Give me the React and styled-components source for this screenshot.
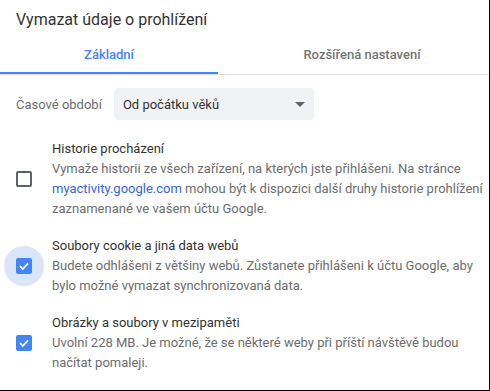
import styled, { createGlobalStyle } from 'styled-components';

const GlobalStyle = createGlobalStyle`
    html, body {
        margin: 0;
        padding: 0;
        background: #ffffff;
    }
    * {
        box-sizing: border-box;
    }
`;

const Dialog = styled.div`
    width: 490px;
    height: 391px;
    background: #ffffff;
    border-right: 1px solid #000000;
    border-bottom: 1px solid #000000;
    font-family: Roboto, 'Noto Sans', Arial, sans-serif;
    overflow: hidden;
`;

const Header = styled.div`
    padding: 10px 16px;
    font-size: 16px;
    line-height: 20px;
    color: #333333;
`;

const TabBar = styled.div`
    display: flex;
    border-bottom: 1px solid #e0e0e0;
`;

const Tab = styled.div`
    width: ${(p) => p.$width}px;
    padding: 5px 0 7px ${(p) => p.$indent || 0}px;
    font-size: 13px;
    font-weight: 500;
    line-height: 20px;
    text-align: center;
    color: ${(p) => (p.$active ? '#4285f4' : '#757575')};
    border-bottom: 2px solid ${(p) => (p.$active ? '#4285f4' : 'transparent')};
    white-space: nowrap;
`;

const SelectRow = styled.div`
    display: flex;
    align-items: center;
    gap: 12px;
    padding: 13px 16px 0;
`;

const Label = styled.span`
    font-size: 13px;
    color: #6d6d6d;
`;

const Select = styled.div`
    width: 200px;
    height: 32px;
    display: flex;
    align-items: center;
    justify-content: space-between;
    padding: 0 9px;
    background: #f1f2f3;
    border-radius: 4px;
    font-size: 13px;
    color: #333333;
`;

const Arrow = styled.span`
    width: 0;
    height: 0;
    margin-right: 0;
    border-left: 5px solid transparent;
    border-right: 5px solid transparent;
    border-top: 5px solid #5f6368;
`;

const List = styled.div`
    display: flex;
    flex-direction: column;
    gap: 17px;
    padding-top: 19px;
`;

const Item = styled.div`
    display: flex;
    align-items: center;
    padding: 0 16px;
`;

const BoxWrap = styled.div`
    position: relative;
    width: 16px;
    height: 16px;
    margin-right: 20px;
    flex-shrink: 0;
`;

const Ripple = styled.span`
    position: absolute;
    left: -12px;
    top: -12px;
    width: 40px;
    height: 40px;
    border-radius: 50%;
    background: #dbe5f8;
`;

const Box = styled.span`
    position: absolute;
    inset: 0;
    display: flex;
    align-items: center;
    justify-content: center;
    border-radius: 2px;
    border: 2px solid ${(p) => (p.$checked ? '#4285f4' : '#5f6368')};
    background: ${(p) => (p.$checked ? '#4285f4' : 'transparent')};
`;

const Texts = styled.div`
    display: flex;
    flex-direction: column;
    font-size: 13px;
    line-height: 20px;
    white-space: nowrap;
`;

const ItemTitle = styled.span`
    color: #333333;
`;

const Line = styled.span`
    color: #6d6d6d;
`;

const Link = styled.a`
    color: #3367d6;
    text-decoration: none;
`;

function Checkbox({ checked, focused }) {
    return (
        <BoxWrap>
            {focused && <Ripple />}
            <Box $checked={checked}>
                {checked && (
                    <svg width="12" height="12" viewBox="0 0 12 12">
                        <path d="M2 6.2 L4.8 9 L10 3.4" fill="none" stroke="#ffffff" strokeWidth="1.8" />
                    </svg>
                )}
            </Box>
        </BoxWrap>
    );
}

function App() {
    const items = [
        {
            title: 'Historie procházení',
            checked: false,
            lines: [
                'Vymaže historii ze všech zařízení, na kterých jste přihlášeni. Na stránce',
                <>
                    <Link href="#">myactivity.google.com</Link> mohou být k dispozici další druhy historie prohlížení
                </>,
                'zaznamenané ve vašem účtu Google.'
            ]
        },
        {
            title: 'Soubory cookie a jiná data webů',
            checked: true,
            focused: true,
            lines: [
                'Budete odhlášeni z většiny webů. Zůstanete přihlášeni k účtu Google, aby',
                'bylo možné vymazat synchronizovaná data.'
            ]
        },
        {
            title: 'Obrázky a soubory v mezipaměti',
            checked: true,
            lines: ['Uvolní 228 MB. Je možné, že se některé weby při příští návštěvě budou', 'načítat pomaleji.']
        }
    ];

    return (
        <Dialog>
            <GlobalStyle />
            <Header>Vymazat údaje o prohlížení</Header>

            <TabBar>
                <Tab $active $width={218}>
                    Základní
                </Tab>
                <Tab $width={271} $indent={17}>
                    Rozšířená nastavení
                </Tab>
            </TabBar>

            <SelectRow>
                <Label>Časové období</Label>
                <Select>
                    <span>Od počátku věků</span>
                    <Arrow />
                </Select>
            </SelectRow>

            <List>
                {items.map((item, index) => (
                    <Item key={index}>
                        <Checkbox checked={item.checked} focused={item.focused} />
                        <Texts>
                            <ItemTitle>{item.title}</ItemTitle>
                            {item.lines.map((line, i) => (
                                <Line key={i}>{line}</Line>
                            ))}
                        </Texts>
                    </Item>
                ))}
            </List>
        </Dialog>
    );
}

export default App;
